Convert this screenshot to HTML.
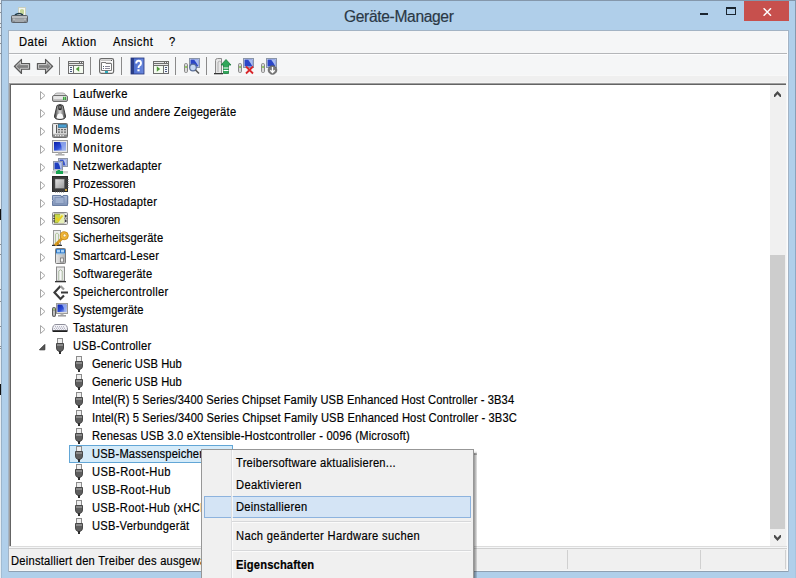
<!DOCTYPE html>
<html><head><meta charset="utf-8"><style>
html,body{margin:0;padding:0}
body{width:796px;height:578px;overflow:hidden;position:relative;background:#b0cfea;font-family:"Liberation Sans", sans-serif;-webkit-text-stroke:0.18px currentColor}
.a{position:absolute}
</style></head><body>
<div class="a" style="left:0;top:0;width:1px;height:578px;background:#e6edf3"></div>
<div class="a" style="left:0;top:3px;width:1px;height:1px;background:#8a8f94"></div><div class="a" style="left:0;top:12px;width:1px;height:1px;background:#8a8f94"></div><div class="a" style="left:0;top:23px;width:1px;height:1px;background:#8a8f94"></div><div class="a" style="left:0;top:27px;width:1px;height:1px;background:#8a8f94"></div><div class="a" style="left:0;top:35px;width:1px;height:1px;background:#8a8f94"></div><div class="a" style="left:0;top:43px;width:1px;height:1px;background:#8a8f94"></div><div class="a" style="left:0;top:53px;width:1px;height:1px;background:#8a8f94"></div><div class="a" style="left:0;top:244px;width:1px;height:1px;background:#8a8f94"></div><div class="a" style="left:0;top:254px;width:1px;height:1px;background:#8a8f94"></div><div class="a" style="left:0;top:289px;width:1px;height:1px;background:#8a8f94"></div><div class="a" style="left:0;top:301px;width:1px;height:1px;background:#8a8f94"></div><div class="a" style="left:0;top:326px;width:1px;height:1px;background:#8a8f94"></div><div class="a" style="left:0;top:346px;width:1px;height:1px;background:#8a8f94"></div><div class="a" style="left:0;top:348px;width:1px;height:1px;background:#8a8f94"></div>
<div class="a" style="left:0;top:209px;width:1px;height:11px;background:#111"></div>
<div class="a" style="left:0;top:384px;width:1px;height:11px;background:#111"></div>
<div class="a" style="left:1px;top:0;width:795px;height:1px;background:#8497ab"></div>
<div class="a" style="left:1px;top:0;width:1px;height:578px;background:linear-gradient(180deg,#8497ab 0%,#8fa6bb 50%,#a2bcd3 100%)"></div>
<div class="a" style="left:795px;top:0;width:1px;height:578px;background:linear-gradient(180deg,#8497ab 0%,#8eaac6 50%,#a8c6e0 100%)"></div>
<!-- title icon -->
<svg class="a" style="left:11px;top:7px" width="17" height="17" viewBox="0 0 17 17">
<rect x="7.5" y="0.5" width="7" height="8" fill="#f4f6ee" stroke="#c8cfc0"/>
<path d="M9 7 V3 Q11 1 13 3 V7Z" fill="#c6d79a"/>
<path d="M4 8 Q8 5 12 8" fill="none" stroke="#1f3b4a" stroke-width="1.6"/>
<rect x="0.5" y="8.5" width="16" height="7" rx="1" fill="#8a9096" stroke="#5c6268"/>
<rect x="1" y="9" width="15" height="2" fill="#b9bdc1"/>
<rect x="4" y="11.5" width="9" height="3.5" fill="#a4a9ad"/><rect x="2.5" y="11.5" width="1" height="2" fill="#e8e8e8"/><rect x="13.5" y="11.5" width="1" height="2" fill="#e8e8e8"/>
</svg>
<div class="a" style="left:344px;top:8px;font-size:15.6px;line-height:18px;color:#2a3845;white-space:nowrap;letter-spacing:-0.35px">Geräte-Manager</div>
<!-- min / max / close -->
<div class="a" style="left:700px;top:13px;width:8px;height:2px;background:#1a2530"></div>
<div class="a" style="left:726px;top:7px;width:8px;height:5px;border:1px solid #1a2530;border-top-width:2px"></div>
<div class="a" style="left:744px;top:1px;width:45px;height:20px;background:#c7504d"></div>
<svg class="a" style="left:763px;top:8px" width="9" height="8" viewBox="0 0 9 8"><path d="M0.6 0.3 L8 7.7 M8 0.3 L0.6 7.7" stroke="#fff" stroke-width="1.5"/></svg>
<!-- client -->
<div class="a" style="left:8px;top:30px;width:779px;height:540px;border:1px solid #a3b3c4;background:#f5f6f7"></div>
<div class="a" style="left:787px;top:31px;width:1px;height:540px;background:#fbfcfd"></div>
<div class="a" style="left:9px;top:53px;width:778px;height:1px;background:#b4b6b9"></div>
<div class="a" style="left:9px;top:54px;width:778px;height:1px;background:#fdfdfe"></div>
<div class="a" style="left:9px;top:75px;width:778px;height:1px;background:#f8f8f8"></div>
<div class="a" style="left:9px;top:76px;width:778px;height:6px;background:#efefef"></div>
<div class="a" style="left:9px;top:82px;width:778px;height:1px;background:#f4f4f4"></div>
<div style="position:absolute;left:19px;top:36px;font-size:12px;line-height:12px;color:#000;white-space:nowrap;letter-spacing:0.543px;transform-origin:0 0;transform:scaleX(0.93);">Datei</div><div style="position:absolute;left:62px;top:36px;font-size:12px;line-height:12px;color:#000;white-space:nowrap;letter-spacing:0.690px;transform-origin:0 0;transform:scaleX(0.93);">Aktion</div><div style="position:absolute;left:113px;top:36px;font-size:12px;line-height:12px;color:#000;white-space:nowrap;letter-spacing:0.561px;transform-origin:0 0;transform:scaleX(0.93);">Ansicht</div><div style="position:absolute;left:169px;top:36px;font-size:12px;line-height:12px;color:#000;white-space:nowrap;letter-spacing:0.25px;transform-origin:0 0;transform:scaleX(0.93);">?</div>
<!-- toolbar -->
<svg class="a" style="left:0;top:0" width="300" height="80" viewBox="0 0 300 80">
<defs>
<linearGradient id="ag" x1="0" y1="0" x2="0" y2="1"><stop offset="0" stop-color="#b4b4b4"/><stop offset="0.55" stop-color="#7c7c7c"/><stop offset="1" stop-color="#9a9a9a"/></linearGradient>
<linearGradient id="hb" x1="0" y1="0" x2="1" y2="0"><stop offset="0" stop-color="#2a3f8a"/><stop offset="0.2" stop-color="#2a3f8a"/><stop offset="0.21" stop-color="#4d6fd0"/><stop offset="1" stop-color="#6a88dc"/></linearGradient>
</defs>
<!-- back -->
<path d="M14.3 66.4 L21.5 59.3 V63.5 H29.6 V69.3 H21.5 V73.5 Z" fill="url(#ag)" stroke="#585858" stroke-width="1.1" stroke-linejoin="round"/>
<path d="M16 66.4 L20.5 62 V64.5 H28.5 V68.3 H20.5 V70.8 Z" fill="none" stroke="#d2d2d2" stroke-width="0.8"/>
<!-- forward -->
<path d="M52.7 66.4 L45.5 59.3 V63.5 H37.4 V69.3 H45.5 V73.5 Z" fill="url(#ag)" stroke="#585858" stroke-width="1.1" stroke-linejoin="round"/>
<path d="M51 66.4 L46.5 62 V64.5 H38.5 V68.3 H46.5 V70.8 Z" fill="none" stroke="#d2d2d2" stroke-width="0.8"/>
<!-- separators -->
<rect x="59" y="57" width="1" height="18" fill="#8a8a8a"/>
<rect x="90" y="57" width="1" height="18" fill="#8a8a8a"/>
<rect x="121" y="57" width="1" height="18" fill="#8a8a8a"/>
<rect x="175" y="57" width="1" height="18" fill="#8a8a8a"/>
<rect x="206" y="57" width="1" height="18" fill="#8a8a8a"/>
<!-- console tree -->
<rect x="68" y="61" width="16" height="13" fill="#6e6e6e"/>
<rect x="69" y="62" width="10" height="1" fill="#e8e8e8"/><rect x="80" y="62" width="1" height="1" fill="#f0f0f0"/><rect x="82" y="62" width="1" height="1" fill="#f0f0f0"/>
<rect x="69" y="64" width="14" height="1" fill="#e6e6e6"/>
<rect x="69" y="66" width="4" height="7" fill="#f6f8fb"/>
<rect x="74" y="66" width="9" height="7" fill="#f4fbf0"/>
<rect x="70" y="67" width="2" height="1" fill="#4a5a80"/><rect x="70" y="69" width="2" height="1" fill="#4a5a80"/><rect x="70" y="71" width="2" height="1" fill="#4a5a80"/>
<path d="M79.2 66.3 V71.7 L75.8 69Z" fill="#4f9a3a"/>
<!-- properties -->
<rect x="99.6" y="58.6" width="14" height="14.8" rx="1.8" fill="#fbfbfb" stroke="#6a6a6a" stroke-width="1.2"/>
<rect x="101" y="60" width="10" height="1" fill="#c4c4c4"/><rect x="111" y="60" width="1" height="1" fill="#555"/>
<path d="M101.5 70.5 V62.5 H106 V63.5 H111.5 V70.5Z" fill="#fff" stroke="#7a7a7a"/>
<rect x="106.5" y="62" width="4.5" height="1" fill="#d8d8d8"/>
<rect x="103" y="66" width="1" height="1" fill="#4a6a70"/><rect x="105" y="66" width="5" height="1" fill="#8a8a9a"/>
<rect x="103" y="68" width="1" height="1" fill="#6a6a90"/><rect x="105" y="68" width="5" height="1" fill="#8a8a9a"/>
<rect x="105" y="71" width="3" height="2" fill="#2aa8b8"/>
<!-- help -->
<rect x="131" y="58" width="13" height="16" fill="url(#hb)"/>
<rect x="131" y="58" width="13" height="16" fill="none" stroke="#23347a" stroke-width="0.8"/>
<path d="M136.2 63.4 Q136.2 60.8 138.6 60.8 Q141 60.8 141 63.2 Q141 64.8 139.4 65.8 Q138.5 66.4 138.5 68" fill="none" stroke="#fff" stroke-width="1.9"/><rect x="137.4" y="69.3" width="2.2" height="2" fill="#fff"/>
<!-- action pane -->
<rect x="153" y="61" width="16" height="13" fill="#6e6e6e"/>
<rect x="154" y="62" width="10" height="1" fill="#e8e8e8"/><rect x="165" y="62" width="1" height="1" fill="#f0f0f0"/><rect x="167" y="62" width="1" height="1" fill="#f0f0f0"/>
<rect x="154" y="64" width="14" height="1" fill="#e6e6e6"/>
<rect x="154" y="66" width="9" height="7" fill="#f4fbf0"/>
<rect x="164" y="66" width="4" height="7" fill="#f6f8fb"/>
<rect x="165" y="67" width="2" height="1" fill="#4a5a80"/><rect x="165" y="69" width="2" height="1" fill="#4a5a80"/><rect x="165" y="71" width="2" height="1" fill="#4a5a80"/>
<path d="M156.8 66.3 V71.7 L160.2 69Z" fill="#4f9a3a"/>
<!-- scan -->
<rect x="189.5" y="58.5" width="10" height="9" fill="#dfe4ec" stroke="#8a95a8"/>
<rect x="190.5" y="59.5" width="8" height="7" fill="#2b46c8"/>
<path d="M194 59.5 H198.5 V66.5 Q196 62 194 59.5Z" fill="#a9bdf0"/>
<rect x="184.5" y="63.5" width="3" height="9" rx="1.2" fill="#d9d9d9" stroke="#8a8a8a"/>
<rect x="185.3" y="66" width="1.5" height="2" fill="#7cc040"/>
<circle cx="193" cy="67.5" r="3.3" fill="#c4d6f2" stroke="#5a6f9a" stroke-width="1.2"/>
<path d="M195.5 70 L199 73.5" stroke="#5a5a5a" stroke-width="1.6"/>
<!-- update driver -->
<path d="M215.5 73.5 V60.5 Q215.5 58.5 217.5 58.5 H221.5 V73.5Z" fill="#e6e6e6" stroke="#8a8a8a"/>
<path d="M218 72 V62 Q219.5 60.5 221 62" fill="none" stroke="#b0b0b0"/>
<rect x="214" y="73" width="9" height="1.3" fill="#333"/>
<path d="M221 65 L226 59.5 L231 65 H228.5 V73.5 H223.5 V65Z" fill="#2fa85a" stroke="#1c7a3e" stroke-width="0.8"/>
<rect x="223.5" y="67.5" width="5" height="1" fill="#fff"/><rect x="223.5" y="70" width="5" height="1" fill="#fff"/>
<!-- uninstall -->
<rect x="243.5" y="58.5" width="10" height="9" fill="#dfe4ec" stroke="#8a95a8"/>
<rect x="244.5" y="59.5" width="8" height="7" fill="#2b46c8"/>
<path d="M248 59.5 H252.5 V66.5 Q250 62 248 59.5Z" fill="#a9bdf0"/>
<rect x="238.5" y="63.5" width="3" height="9" rx="1.2" fill="#d9d9d9" stroke="#8a8a8a"/>
<rect x="239.3" y="66" width="1.5" height="2" fill="#7cc040"/>
<path d="M246 66.5 L253 73.5 M253 66.5 L246 73.5" stroke="#d8262a" stroke-width="1.8"/>
<!-- disable -->
<rect x="266.5" y="58.5" width="10" height="9" fill="#dfe4ec" stroke="#8a95a8"/>
<rect x="267.5" y="59.5" width="8" height="7" fill="#2b46c8"/>
<path d="M271 59.5 H275.5 V66.5 Q273 62 271 59.5Z" fill="#a9bdf0"/>
<rect x="261.5" y="63.5" width="3" height="9" rx="1.2" fill="#d9d9d9" stroke="#8a8a8a"/>
<rect x="262.3" y="66" width="1.5" height="2" fill="#7cc040"/>
<circle cx="272.5" cy="70" r="4.3" fill="#7a7a7a" stroke="#5a5a5a" stroke-width="0.8"/>
<path d="M272.5 67 V72.5 M270.3 70.3 L272.5 72.5 L274.7 70.3" fill="none" stroke="#fff" stroke-width="1.3"/>
</svg>
<!-- tree -->
<div class="a" style="left:9px;top:83px;width:777px;height:463px;background:#fff;border-left:1px solid #a0a0a0;border-top:1px solid #a0a0a0;box-sizing:border-box"></div>
<div class="a" style="left:10px;top:84px;width:776px;height:462px;background:#fff;border-left:1px solid #646464;border-top:1px solid #646464;box-sizing:border-box"></div>
<svg style="position:absolute;left:40px;top:91px" width="7" height="10" viewBox="0 0 7 10"><path d="M0.5 0.5 L5 4.5 L0.5 8.5 Z" fill="none" stroke="#a6a6a6"/></svg>
<svg style="position:absolute;left:52px;top:86px" width="17" height="17" viewBox="0 0 17 17"><defs><linearGradient id="dg" x1="0" y1="0" x2="0" y2="1"><stop offset="0" stop-color="#f0f0f0"/><stop offset="1" stop-color="#a8a8a8"/></linearGradient></defs><path d="M2 9.5 Q3 7 5 7 H11 Q13 7 14 9.5Z" fill="#dcdcdc" stroke="#9a9a9a" stroke-width="0.8"/><rect x="0.5" y="9.5" width="15" height="6" rx="1.5" fill="url(#dg)" stroke="#6e6e6e"/><rect x="2" y="11" width="9" height="2" fill="#e6e6e6"/><rect x="11" y="10.8" width="1.3" height="3.2" fill="#39a539"/><rect x="12.8" y="10.8" width="1.3" height="3.2" fill="#39a539"/></svg>
<div style="position:absolute;left:73px;top:88px;font-size:12px;line-height:12px;color:#000;white-space:nowrap;letter-spacing:0.401px;transform-origin:0 0;transform:scaleX(0.93);">Laufwerke</div>
<svg style="position:absolute;left:40px;top:109px" width="7" height="10" viewBox="0 0 7 10"><path d="M0.5 0.5 L5 4.5 L0.5 8.5 Z" fill="none" stroke="#a6a6a6"/></svg>
<svg style="position:absolute;left:52px;top:104px" width="17" height="17" viewBox="0 0 17 17"><defs><linearGradient id="mg" x1="0" y1="0" x2="1" y2="0"><stop offset="0" stop-color="#3a3a3a"/><stop offset="0.3" stop-color="#9a9a9a"/><stop offset="0.5" stop-color="#e0e0e0"/><stop offset="0.7" stop-color="#9a9a9a"/><stop offset="1" stop-color="#404040"/></linearGradient></defs><path d="M5 1.5 Q8 -0.5 11 1.5 L13.5 12 Q14 15.5 8 15.5 Q2 15.5 2.5 12Z" fill="url(#mg)" stroke="#3c3c3c"/><path d="M6.3 1.5 Q8 0.5 9.7 1.5 V5.5 Q8 7 6.3 5.5Z" fill="#2a2a2a"/><rect x="7.5" y="2" width="1" height="2.5" fill="#bbb"/><path d="M5.5 10.5 Q8 8.5 10.5 10.5 L11.5 14 Q8 15 4.5 14Z" fill="#fafafa"/></svg>
<div style="position:absolute;left:73px;top:106px;font-size:12px;line-height:12px;color:#000;white-space:nowrap;letter-spacing:0.295px;transform-origin:0 0;transform:scaleX(0.93);">Mäuse und andere Zeigegeräte</div>
<svg style="position:absolute;left:40px;top:127px" width="7" height="10" viewBox="0 0 7 10"><path d="M0.5 0.5 L5 4.5 L0.5 8.5 Z" fill="none" stroke="#a6a6a6"/></svg>
<svg style="position:absolute;left:52px;top:122px" width="17" height="17" viewBox="0 0 17 17"><rect x="0.5" y="1.5" width="15" height="14" rx="1" fill="#d4d4d4" stroke="#6e6e6e"/><rect x="1.5" y="2.5" width="3" height="9" fill="#f2f2f2"/><rect x="4" y="3" width="1" height="8" fill="#555"/><rect x="6.5" y="2.5" width="8" height="3" fill="#4aa0d2" stroke="#3a6e90" stroke-width="0.8"/><path d="M6 7h2v1.3H6zM9 7h2v1.3H9zM12 7h2v1.3h-2zM6 9.5h2v1.3H6zM9 9.5h2v1.3H9zM12 9.5h2v1.3h-2z" fill="#6a6a6a"/><rect x="1" y="12.5" width="14" height="2.5" fill="#8a8a8a"/><path d="M3 13h1.3v1.3H3zM5.5 13h1.3v1.3H5.5zM8 13h1.3v1.3H8zM10.5 13h1.3v1.3h-1.3z" fill="#eee"/></svg>
<div style="position:absolute;left:73px;top:124px;font-size:12px;line-height:12px;color:#000;white-space:nowrap;letter-spacing:0.871px;transform-origin:0 0;transform:scaleX(0.93);">Modems</div>
<svg style="position:absolute;left:40px;top:145px" width="7" height="10" viewBox="0 0 7 10"><path d="M0.5 0.5 L5 4.5 L0.5 8.5 Z" fill="none" stroke="#a6a6a6"/></svg>
<svg style="position:absolute;left:52px;top:140px" width="17" height="17" viewBox="0 0 17 17"><defs><linearGradient id="sg" x1="0" y1="0" x2="1" y2="1"><stop offset="0" stop-color="#0a1fa8"/><stop offset="0.55" stop-color="#2e4fd8"/><stop offset="1" stop-color="#c8d4f4"/></linearGradient></defs><rect x="0.5" y="0.5" width="15" height="12" fill="#e8e8e8" stroke="#9a9a9a"/><rect x="2" y="2" width="12" height="8.6" fill="url(#sg)"/><path d="M8 2 H14 V10.6 H10 Q9.5 5 8 2Z" fill="#9fb4ee" opacity="0.8"/><rect x="6" y="12.5" width="4" height="1.5" fill="#b8b8b8"/><rect x="3.5" y="14" width="9" height="1.6" fill="#b0b0b0"/></svg>
<div style="position:absolute;left:73px;top:142px;font-size:12px;line-height:12px;color:#000;white-space:nowrap;letter-spacing:0.945px;transform-origin:0 0;transform:scaleX(0.93);">Monitore</div>
<svg style="position:absolute;left:40px;top:163px" width="7" height="10" viewBox="0 0 7 10"><path d="M0.5 0.5 L5 4.5 L0.5 8.5 Z" fill="none" stroke="#a6a6a6"/></svg>
<svg style="position:absolute;left:52px;top:158px" width="17" height="17" viewBox="0 0 17 17"><rect x="6.5" y="0.5" width="9" height="8" fill="#d6dbe6" stroke="#8e96a6"/><rect x="7.5" y="1.5" width="7" height="6" fill="#3a55c8"/><path d="M11 1.5h3.5v6h-1Q13 4 11 1.5Z" fill="#b8c6f0"/><rect x="1.5" y="3.5" width="9" height="8.5" fill="#d6dbe6" stroke="#8e96a6"/><rect x="2.5" y="4.5" width="7" height="6.5" fill="#1f3fc0"/><path d="M6 4.5h3.5v6.5h-1Q8 7 6 4.5Z" fill="#b8c6f0"/><rect x="0" y="13" width="16" height="2.5" fill="#cfcfcf"/><path d="M5.5 12 H8 V13 H11 V16 H4 V13 H5.5Z" fill="#18a552"/></svg>
<div style="position:absolute;left:73px;top:160px;font-size:12px;line-height:12px;color:#000;white-space:nowrap;letter-spacing:0.323px;transform-origin:0 0;transform:scaleX(0.93);">Netzwerkadapter</div>
<svg style="position:absolute;left:40px;top:181px" width="7" height="10" viewBox="0 0 7 10"><path d="M0.5 0.5 L5 4.5 L0.5 8.5 Z" fill="none" stroke="#a6a6a6"/></svg>
<svg style="position:absolute;left:52px;top:176px" width="17" height="17" viewBox="0 0 17 17"><defs><linearGradient id="cg" x1="0" y1="0" x2="1" y2="1"><stop offset="0" stop-color="#e4e4e4"/><stop offset="1" stop-color="#9a9a9a"/></linearGradient></defs><rect x="0.5" y="0.5" width="15" height="15" fill="#3c3c3c" stroke="#2a2a2a"/><path d="M16 3v1M16 5v1M16 7v1M16 9v1M16 11v1M3 16h1M5 16h1M7 16h1M9 16h1M11 16h1" stroke="#6a6a6a"/><rect x="3" y="3" width="9.5" height="9.5" fill="url(#cg)" stroke="#555" stroke-width="0.5"/><rect x="13" y="13" width="2" height="2" fill="#c8a040"/></svg>
<div style="position:absolute;left:73px;top:178px;font-size:12px;line-height:12px;color:#000;white-space:nowrap;letter-spacing:-0.019px;transform-origin:0 0;transform:scaleX(0.93);">Prozessoren</div>
<svg style="position:absolute;left:40px;top:199px" width="7" height="10" viewBox="0 0 7 10"><path d="M0.5 0.5 L5 4.5 L0.5 8.5 Z" fill="none" stroke="#a6a6a6"/></svg>
<svg style="position:absolute;left:52px;top:194px" width="17" height="17" viewBox="0 0 17 17"><defs><linearGradient id="sdg" x1="0" y1="0" x2="0" y2="1"><stop offset="0" stop-color="#aebdd8"/><stop offset="1" stop-color="#7f93b8"/></linearGradient></defs><path d="M0.5 1.5 H9 V2.5 H11 V1.5 H15.5 V11.5 H0.5 V7 L1.5 6.5 L0.5 6Z" fill="url(#sdg)" stroke="#6a7ea2"/><rect x="3" y="3.5" width="9" height="6" fill="#9fb0cf" stroke="#7c90b4" stroke-width="0.8"/><path d="M15.5 3h1M15.5 5h1M15.5 7h1M15.5 9h1" stroke="#6a7ea2"/></svg>
<div style="position:absolute;left:73px;top:196px;font-size:12px;line-height:12px;color:#000;white-space:nowrap;letter-spacing:0.318px;transform-origin:0 0;transform:scaleX(0.93);">SD-Hostadapter</div>
<svg style="position:absolute;left:40px;top:217px" width="7" height="10" viewBox="0 0 7 10"><path d="M0.5 0.5 L5 4.5 L0.5 8.5 Z" fill="none" stroke="#a6a6a6"/></svg>
<svg style="position:absolute;left:52px;top:212px" width="17" height="17" viewBox="0 0 17 17"><rect x="0.5" y="0.5" width="15" height="12" rx="1" fill="#e4e4e4" stroke="#8a8a8a"/><rect x="2.5" y="2" width="9.5" height="9" fill="#c8d84a" stroke="#6a6a40" stroke-width="0.6"/><path d="M8 2 H12 V11 H6 Q9 6 8 2Z" fill="#e6efb8"/><path d="M4 5.5 L6.5 8.5 L10.5 3.5" fill="none" stroke="#e8d020" stroke-width="2"/><circle cx="2" cy="4" r="0.8" fill="#222"/><circle cx="2" cy="6.5" r="0.8" fill="#222"/><circle cx="2" cy="9" r="0.8" fill="#222"/><circle cx="13.8" cy="4" r="0.9" fill="#222"/><circle cx="13.8" cy="6.5" r="0.9" fill="#fff" stroke="#222" stroke-width="0.5"/><circle cx="13.8" cy="9" r="0.9" fill="#222"/></svg>
<div style="position:absolute;left:73px;top:214px;font-size:12px;line-height:12px;color:#000;white-space:nowrap;letter-spacing:-0.077px;transform-origin:0 0;transform:scaleX(0.93);">Sensoren</div>
<svg style="position:absolute;left:40px;top:235px" width="7" height="10" viewBox="0 0 7 10"><path d="M0.5 0.5 L5 4.5 L0.5 8.5 Z" fill="none" stroke="#a6a6a6"/></svg>
<svg style="position:absolute;left:52px;top:230px" width="17" height="17" viewBox="0 0 17 17"><rect x="1.5" y="0.5" width="7" height="14" fill="#ececec" stroke="#9a9a9a"/><path d="M3.5 13 V4 Q5 2 6.5 4 V13" fill="none" stroke="#b4c8a0"/><rect x="0" y="14.8" width="10" height="1.2" fill="#333"/><path d="M10.5 8 L3 15.2" stroke="#d89a20" stroke-width="2.8"/><path d="M5.2 12.8 L7 14.6" stroke="#c08010" stroke-width="1.3"/><circle cx="12.3" cy="5.7" r="4" fill="#f0b636" stroke="#c88a18" stroke-width="0.9"/><circle cx="12.6" cy="5.4" r="1.5" fill="#fff8e0" stroke="#c88a18" stroke-width="0.6"/></svg>
<div style="position:absolute;left:73px;top:232px;font-size:12px;line-height:12px;color:#000;white-space:nowrap;letter-spacing:0.218px;transform-origin:0 0;transform:scaleX(0.93);">Sicherheitsgeräte</div>
<svg style="position:absolute;left:40px;top:253px" width="7" height="10" viewBox="0 0 7 10"><path d="M0.5 0.5 L5 4.5 L0.5 8.5 Z" fill="none" stroke="#a6a6a6"/></svg>
<svg style="position:absolute;left:52px;top:248px" width="17" height="17" viewBox="0 0 17 17"><defs><linearGradient id="scg" x1="0" y1="0" x2="1" y2="0"><stop offset="0" stop-color="#e8e8e8"/><stop offset="1" stop-color="#b0b0b0"/></linearGradient></defs><rect x="3.5" y="0.5" width="10" height="15" rx="1" fill="url(#scg)" stroke="#7c7c7c"/><rect x="4" y="1" width="9" height="4.5" fill="#2f78c8"/><rect x="5" y="1.8" width="3" height="2.6" fill="#a8d0f4"/><rect x="9" y="1.8" width="3" height="2.6" fill="#a8d0f4"/><rect x="4" y="5.5" width="9" height="0.8" fill="#8fc4ee"/><rect x="8.5" y="10" width="3" height="4" fill="#f0f0f0" stroke="#777" stroke-width="0.8"/></svg>
<div style="position:absolute;left:73px;top:250px;font-size:12px;line-height:12px;color:#000;white-space:nowrap;letter-spacing:0.212px;transform-origin:0 0;transform:scaleX(0.93);">Smartcard-Leser</div>
<svg style="position:absolute;left:40px;top:271px" width="7" height="10" viewBox="0 0 7 10"><path d="M0.5 0.5 L5 4.5 L0.5 8.5 Z" fill="none" stroke="#a6a6a6"/></svg>
<svg style="position:absolute;left:52px;top:266px" width="17" height="17" viewBox="0 0 17 17"><rect x="4.5" y="1" width="8" height="14" fill="#e8e8e8" stroke="#8a8a8a"/><path d="M6.8 14 V5 Q8.5 2.5 10.2 5 V14" fill="#f8f8f8" stroke="#a8b8a0"/><rect x="3" y="15" width="11" height="1.3" fill="#333"/></svg>
<div style="position:absolute;left:73px;top:268px;font-size:12px;line-height:12px;color:#000;white-space:nowrap;letter-spacing:0.289px;transform-origin:0 0;transform:scaleX(0.93);">Softwaregeräte</div>
<svg style="position:absolute;left:40px;top:289px" width="7" height="10" viewBox="0 0 7 10"><path d="M0.5 0.5 L5 4.5 L0.5 8.5 Z" fill="none" stroke="#a6a6a6"/></svg>
<svg style="position:absolute;left:52px;top:284px" width="17" height="17" viewBox="0 0 17 17"><path d="M8.5 2 L2.5 8.5 L8.5 15 L12 11.5" fill="none" stroke="#3a3a3a" stroke-width="2.2"/><path d="M8.5 2 L12 5.5" fill="none" stroke="#9a9a9a" stroke-width="2.2"/><rect x="9" y="7.5" width="7" height="2" fill="#3a3a3a"/></svg>
<div style="position:absolute;left:73px;top:286px;font-size:12px;line-height:12px;color:#000;white-space:nowrap;letter-spacing:0.336px;transform-origin:0 0;transform:scaleX(0.93);">Speichercontroller</div>
<svg style="position:absolute;left:40px;top:307px" width="7" height="10" viewBox="0 0 7 10"><path d="M0.5 0.5 L5 4.5 L0.5 8.5 Z" fill="none" stroke="#a6a6a6"/></svg>
<svg style="position:absolute;left:52px;top:302px" width="17" height="17" viewBox="0 0 17 17"><defs><linearGradient id="syg" x1="0" y1="0" x2="1" y2="1"><stop offset="0" stop-color="#0a1fa8"/><stop offset="0.55" stop-color="#2e4fd8"/><stop offset="1" stop-color="#c8d4f4"/></linearGradient></defs><rect x="4.5" y="1.5" width="11" height="10" fill="#dcdcdc" stroke="#9a9a9a"/><rect x="5.5" y="2.5" width="9" height="7.5" fill="url(#syg)"/><path d="M10 2.5 H14.5 V10 H12.5 Q12 5 10 2.5Z" fill="#9fb4ee" opacity="0.85"/><rect x="8.5" y="11.5" width="3" height="1.5" fill="#b0b0b0"/><rect x="6" y="13" width="8" height="1.6" fill="#a0a0a0"/><rect x="0.5" y="5.5" width="3" height="9" rx="1" fill="#9a9a9a" stroke="#4e4e4e" stroke-width="0.9"/><rect x="1.2" y="6.5" width="1.6" height="1.6" fill="#a8d070"/><rect x="1.4" y="9" width="1.2" height="4" fill="#d8d8d8"/></svg>
<div style="position:absolute;left:73px;top:304px;font-size:12px;line-height:12px;color:#000;white-space:nowrap;letter-spacing:0.167px;transform-origin:0 0;transform:scaleX(0.93);">Systemgeräte</div>
<svg style="position:absolute;left:40px;top:325px" width="7" height="10" viewBox="0 0 7 10"><path d="M0.5 0.5 L5 4.5 L0.5 8.5 Z" fill="none" stroke="#a6a6a6"/></svg>
<svg style="position:absolute;left:52px;top:320px" width="17" height="17" viewBox="0 0 17 17"><path d="M0.5 10 Q0.5 4.5 4 4.5 H12 Q15.5 4.5 15.5 10 V11 H0.5Z" fill="#f4f4f8" stroke="#8e8e9a"/><path d="M3 6.5h10M2 8.5h12" stroke="#b8b8c6" stroke-width="1" stroke-dasharray="1 1"/><path d="M2.5 7.5h11M2 9.5h12" stroke="#c8c8d4" stroke-width="1" stroke-dasharray="1 1" stroke-dashoffset="1"/><rect x="0.5" y="10.3" width="15" height="1.8" rx="0.8" fill="#1e1e1e"/></svg>
<div style="position:absolute;left:73px;top:322px;font-size:12px;line-height:12px;color:#000;white-space:nowrap;letter-spacing:0.329px;transform-origin:0 0;transform:scaleX(0.93);">Tastaturen</div>
<svg style="position:absolute;left:39px;top:344px" width="8" height="8" viewBox="0 0 8 8"><path d="M0.5 5.8 L5.8 0.5 V5.8 Z" fill="#555" stroke="#3c3c3c"/></svg>
<svg style="position:absolute;left:56px;top:338px" width="10" height="16" viewBox="0 0 10 16">
<rect x="1.5" y="0.5" width="5" height="5" fill="#eeeeee" stroke="#8c8c8c"/>
<path d="M0.5 5.5 H7.5 V10 Q7.5 12.8 4.8 13.5 H3.2 Q0.5 12.8 0.5 10 Z" fill="#5e5e5e" stroke="#484848"/>
<rect x="1" y="6" width="6" height="2" fill="#8a8a8a"/>
<rect x="3" y="13" width="2" height="3" fill="#2e2e2e"/>
</svg>
<div style="position:absolute;left:73px;top:340px;font-size:12px;line-height:12px;color:#000;white-space:nowrap;letter-spacing:0.265px;transform-origin:0 0;transform:scaleX(0.93);">USB-Controller</div>
<svg style="position:absolute;left:75px;top:356px" width="10" height="16" viewBox="0 0 10 16">
<rect x="1.5" y="0.5" width="5" height="5" fill="#eeeeee" stroke="#8c8c8c"/>
<path d="M0.5 5.5 H7.5 V10 Q7.5 12.8 4.8 13.5 H3.2 Q0.5 12.8 0.5 10 Z" fill="#5e5e5e" stroke="#484848"/>
<rect x="1" y="6" width="6" height="2" fill="#8a8a8a"/>
<rect x="3" y="13" width="2" height="3" fill="#2e2e2e"/>
</svg>
<div style="position:absolute;left:92px;top:358px;font-size:12px;line-height:12px;color:#000;white-space:nowrap;letter-spacing:0.083px;transform-origin:0 0;transform:scaleX(0.93);">Generic USB Hub</div>
<svg style="position:absolute;left:75px;top:374px" width="10" height="16" viewBox="0 0 10 16">
<rect x="1.5" y="0.5" width="5" height="5" fill="#eeeeee" stroke="#8c8c8c"/>
<path d="M0.5 5.5 H7.5 V10 Q7.5 12.8 4.8 13.5 H3.2 Q0.5 12.8 0.5 10 Z" fill="#5e5e5e" stroke="#484848"/>
<rect x="1" y="6" width="6" height="2" fill="#8a8a8a"/>
<rect x="3" y="13" width="2" height="3" fill="#2e2e2e"/>
</svg>
<div style="position:absolute;left:92px;top:376px;font-size:12px;line-height:12px;color:#000;white-space:nowrap;letter-spacing:0.083px;transform-origin:0 0;transform:scaleX(0.93);">Generic USB Hub</div>
<svg style="position:absolute;left:75px;top:392px" width="10" height="16" viewBox="0 0 10 16">
<rect x="1.5" y="0.5" width="5" height="5" fill="#eeeeee" stroke="#8c8c8c"/>
<path d="M0.5 5.5 H7.5 V10 Q7.5 12.8 4.8 13.5 H3.2 Q0.5 12.8 0.5 10 Z" fill="#5e5e5e" stroke="#484848"/>
<rect x="1" y="6" width="6" height="2" fill="#8a8a8a"/>
<rect x="3" y="13" width="2" height="3" fill="#2e2e2e"/>
</svg>
<div style="position:absolute;left:92px;top:394px;font-size:12px;line-height:12px;color:#000;white-space:nowrap;letter-spacing:0.123px;transform-origin:0 0;transform:scaleX(0.93);">Intel(R) 5 Series/3400 Series Chipset Family USB Enhanced Host Controller - 3B34</div>
<svg style="position:absolute;left:75px;top:410px" width="10" height="16" viewBox="0 0 10 16">
<rect x="1.5" y="0.5" width="5" height="5" fill="#eeeeee" stroke="#8c8c8c"/>
<path d="M0.5 5.5 H7.5 V10 Q7.5 12.8 4.8 13.5 H3.2 Q0.5 12.8 0.5 10 Z" fill="#5e5e5e" stroke="#484848"/>
<rect x="1" y="6" width="6" height="2" fill="#8a8a8a"/>
<rect x="3" y="13" width="2" height="3" fill="#2e2e2e"/>
</svg>
<div style="position:absolute;left:92px;top:412px;font-size:12px;line-height:12px;color:#000;white-space:nowrap;letter-spacing:0.134px;transform-origin:0 0;transform:scaleX(0.93);">Intel(R) 5 Series/3400 Series Chipset Family USB Enhanced Host Controller - 3B3C</div>
<svg style="position:absolute;left:75px;top:428px" width="10" height="16" viewBox="0 0 10 16">
<rect x="1.5" y="0.5" width="5" height="5" fill="#eeeeee" stroke="#8c8c8c"/>
<path d="M0.5 5.5 H7.5 V10 Q7.5 12.8 4.8 13.5 H3.2 Q0.5 12.8 0.5 10 Z" fill="#5e5e5e" stroke="#484848"/>
<rect x="1" y="6" width="6" height="2" fill="#8a8a8a"/>
<rect x="3" y="13" width="2" height="3" fill="#2e2e2e"/>
</svg>
<div style="position:absolute;left:92px;top:430px;font-size:12px;line-height:12px;color:#000;white-space:nowrap;letter-spacing:0.196px;transform-origin:0 0;transform:scaleX(0.93);">Renesas USB 3.0 eXtensible-Hostcontroller - 0096 (Microsoft)</div>
<div style="position:absolute;left:69px;top:445px;width:162px;height:16px;background:#d5ebf9;border:1px solid #62a6d6"></div>
<svg style="position:absolute;left:75px;top:446px" width="10" height="16" viewBox="0 0 10 16">
<rect x="1.5" y="0.5" width="5" height="5" fill="#eeeeee" stroke="#8c8c8c"/>
<path d="M0.5 5.5 H7.5 V10 Q7.5 12.8 4.8 13.5 H3.2 Q0.5 12.8 0.5 10 Z" fill="#5e5e5e" stroke="#484848"/>
<rect x="1" y="6" width="6" height="2" fill="#8a8a8a"/>
<rect x="3" y="13" width="2" height="3" fill="#2e2e2e"/>
</svg>
<div style="position:absolute;left:92px;top:448px;font-size:12px;line-height:12px;color:#000;white-space:nowrap;letter-spacing:0.193px;transform-origin:0 0;transform:scaleX(0.93);">USB-Massenspeicher</div>
<svg style="position:absolute;left:75px;top:464px" width="10" height="16" viewBox="0 0 10 16">
<rect x="1.5" y="0.5" width="5" height="5" fill="#eeeeee" stroke="#8c8c8c"/>
<path d="M0.5 5.5 H7.5 V10 Q7.5 12.8 4.8 13.5 H3.2 Q0.5 12.8 0.5 10 Z" fill="#5e5e5e" stroke="#484848"/>
<rect x="1" y="6" width="6" height="2" fill="#8a8a8a"/>
<rect x="3" y="13" width="2" height="3" fill="#2e2e2e"/>
</svg>
<div style="position:absolute;left:92px;top:466px;font-size:12px;line-height:12px;color:#000;white-space:nowrap;letter-spacing:0.394px;transform-origin:0 0;transform:scaleX(0.93);">USB-Root-Hub</div>
<svg style="position:absolute;left:75px;top:482px" width="10" height="16" viewBox="0 0 10 16">
<rect x="1.5" y="0.5" width="5" height="5" fill="#eeeeee" stroke="#8c8c8c"/>
<path d="M0.5 5.5 H7.5 V10 Q7.5 12.8 4.8 13.5 H3.2 Q0.5 12.8 0.5 10 Z" fill="#5e5e5e" stroke="#484848"/>
<rect x="1" y="6" width="6" height="2" fill="#8a8a8a"/>
<rect x="3" y="13" width="2" height="3" fill="#2e2e2e"/>
</svg>
<div style="position:absolute;left:92px;top:484px;font-size:12px;line-height:12px;color:#000;white-space:nowrap;letter-spacing:0.394px;transform-origin:0 0;transform:scaleX(0.93);">USB-Root-Hub</div>
<svg style="position:absolute;left:75px;top:500px" width="10" height="16" viewBox="0 0 10 16">
<rect x="1.5" y="0.5" width="5" height="5" fill="#eeeeee" stroke="#8c8c8c"/>
<path d="M0.5 5.5 H7.5 V10 Q7.5 12.8 4.8 13.5 H3.2 Q0.5 12.8 0.5 10 Z" fill="#5e5e5e" stroke="#484848"/>
<rect x="1" y="6" width="6" height="2" fill="#8a8a8a"/>
<rect x="3" y="13" width="2" height="3" fill="#2e2e2e"/>
</svg>
<div style="position:absolute;left:92px;top:502px;font-size:12px;line-height:12px;color:#000;white-space:nowrap;letter-spacing:0.325px;transform-origin:0 0;transform:scaleX(0.93);">USB-Root-Hub (xHCI)</div>
<svg style="position:absolute;left:75px;top:518px" width="10" height="16" viewBox="0 0 10 16">
<rect x="1.5" y="0.5" width="5" height="5" fill="#eeeeee" stroke="#8c8c8c"/>
<path d="M0.5 5.5 H7.5 V10 Q7.5 12.8 4.8 13.5 H3.2 Q0.5 12.8 0.5 10 Z" fill="#5e5e5e" stroke="#484848"/>
<rect x="1" y="6" width="6" height="2" fill="#8a8a8a"/>
<rect x="3" y="13" width="2" height="3" fill="#2e2e2e"/>
</svg>
<div style="position:absolute;left:92px;top:520px;font-size:12px;line-height:12px;color:#000;white-space:nowrap;letter-spacing:0.251px;transform-origin:0 0;transform:scaleX(0.93);">USB-Verbundgerät</div>
<!-- scrollbar -->
<div class="a" style="left:770px;top:85px;width:16px;height:461px;background:#f0f0f0"></div>
<div class="a" style="left:770px;top:255px;width:15px;height:274px;background:#cdcdcd"></div>
<svg class="a" style="left:773px;top:90px" width="10" height="8" viewBox="0 0 10 8"><path d="M1 4.8 L4.5 1 L8 4.8 V7 H7 L4.5 4.2 L2 7 H1Z" fill="#4a4a4a"/></svg>
<svg class="a" style="left:773px;top:535px" width="10" height="8" viewBox="0 0 10 8"><path d="M1 2.2 L4.5 6 L8 2.2 V0 H7 L4.5 2.8 L2 0 H1Z" fill="#4a4a4a"/></svg>
<!-- status bar -->
<div class="a" style="left:9px;top:546px;width:778px;height:1px;background:#dcdcdc"></div>
<div class="a" style="left:9px;top:548px;width:778px;height:1px;background:#d0d0d0"></div>
<div class="a" style="left:9px;top:549px;width:778px;height:21px;background:#f0f0f0"></div>
<div class="a" style="left:9px;top:571px;width:779px;height:1px;background:#8fa0b2"></div>
<div class="a" style="left:567px;top:550px;width:1px;height:19px;background:#d0d0d0"></div>
<div class="a" style="left:700px;top:550px;width:1px;height:19px;background:#d0d0d0"></div>
<div class="a" style="left:785px;top:550px;width:1px;height:19px;background:#d0d0d0"></div>
<div style="position:absolute;left:11px;top:555px;font-size:12px;line-height:12px;color:#000;white-space:nowrap;letter-spacing:0.255px;transform-origin:0 0;transform:scaleX(0.93);">Deinstalliert den Treiber des ausgewählten Geräts.</div>
<!-- context menu -->
<div class="a" style="left:474px;top:453px;width:3px;height:130px;background:linear-gradient(90deg,rgba(0,0,0,0.42),rgba(0,0,0,0.1))"></div>
<div class="a" style="left:474px;top:451px;width:3px;height:4px;background:linear-gradient(180deg,rgba(0,0,0,0),rgba(0,0,0,0.3))"></div>
<div class="a" style="left:201px;top:449px;width:271px;height:140px;border:1px solid #979797;background:#f0f0f0"></div>
<div class="a" style="left:204px;top:496px;width:265px;height:20px;background:#d4e4f5;border:1px solid #8db3de"></div>
<div class="a" style="left:231px;top:450px;width:1px;height:130px;background:#dddee0"></div>
<div class="a" style="left:232px;top:450px;width:1px;height:130px;background:rgba(255,255,255,0.7)"></div>
<div class="a" style="left:232px;top:521px;width:239px;height:1px;background:#d7d8da"></div>
<div class="a" style="left:232px;top:522px;width:239px;height:1px;background:rgba(255,255,255,0.7)"></div>
<div class="a" style="left:232px;top:550px;width:239px;height:1px;background:#d7d8da"></div>
<div class="a" style="left:232px;top:551px;width:239px;height:1px;background:rgba(255,255,255,0.7)"></div>
<div style="position:absolute;left:236px;top:457px;font-size:12px;line-height:12px;color:#000;white-space:nowrap;letter-spacing:0.257px;transform-origin:0 0;transform:scaleX(0.93);">Treibersoftware aktualisieren...</div><div style="position:absolute;left:236px;top:479px;font-size:12px;line-height:12px;color:#000;white-space:nowrap;letter-spacing:0.347px;transform-origin:0 0;transform:scaleX(0.93);">Deaktivieren</div><div style="position:absolute;left:236px;top:501px;font-size:12px;line-height:12px;color:#000;white-space:nowrap;letter-spacing:0.295px;transform-origin:0 0;transform:scaleX(0.93);">Deinstallieren</div><div style="position:absolute;left:236px;top:530px;font-size:12px;line-height:12px;color:#000;white-space:nowrap;letter-spacing:0.357px;transform-origin:0 0;transform:scaleX(0.93);">Nach geänderter Hardware suchen</div><div style="position:absolute;left:236px;top:559px;font-size:12px;line-height:12px;color:#000;white-space:nowrap;letter-spacing:0.168px;transform-origin:0 0;transform:scaleX(0.93);font-weight:bold">Eigenschaften</div>
</body></html>
